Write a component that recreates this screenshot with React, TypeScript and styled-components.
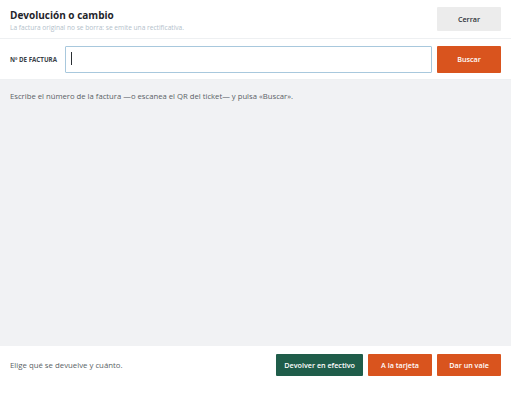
import React, { FC } from 'react';
import styled, { createGlobalStyle } from 'styled-components';

const GlobalStyle = createGlobalStyle`
  html, body {
    margin: 0;
    padding: 0;
    background: #ffffff;
  }
  body {
    font-family: 'Open Sans', 'Noto Sans', sans-serif;
    color: #333a40;
  }
`;

const Panel = styled('div')`
  width: 511px;
  height: 384px;
  display: flex;
  flex-direction: column;
  background: #ffffff;
`;

const Header = styled('header')`
  display: flex;
  align-items: center;
  justify-content: space-between;
  height: 38px;
  padding: 0 10px;
  border-bottom: 1px solid #eef0f2;
`;

const TitleBlock = styled('div')`
  display: flex;
  flex-direction: column;
  gap: 1px;
  padding-top: 1px;
`;

const Title = styled('h1')`
  margin: 0;
  font-size: 10px;
  font-weight: 700;
  line-height: 14px;
  color: #1f252b;
`;

const Subtitle = styled('p')`
  margin: 0;
  font-size: 6.6px;
  line-height: 9px;
  color: #b3c1cb;
`;

type Tone = 'neutral' | 'primary' | 'success';

const toneBg: Record<Tone, string> = {
  neutral: '#ececec',
  primary: '#d9541e',
  success: '#1f5d4a',
};

const Button = styled('button')<{ $tone: Tone; $size?: 'sm' | 'md' | 'lg' }>`
  height: ${({ $size }) => ($size === 'lg' ? '27px' : $size === 'sm' ? '22px' : '24px')};
  min-width: 64px;
  padding: 0 8px;
  border: none;
  border-radius: 1px;
  font-family: inherit;
  font-size: 7.2px;
  font-weight: 600;
  background: ${({ $tone }) => toneBg[$tone]};
  color: ${({ $tone }) => ($tone === 'neutral' ? '#2c3238' : '#ffffff')};
  cursor: pointer;
`;

const SearchRow = styled('div')`
  display: flex;
  align-items: center;
  gap: 5px;
  height: 40px;
  padding: 0 10px;
  border-bottom: 1px solid #eef0f2;
`;

const FieldLabel = styled('label')`
  font-size: 6.2px;
  font-weight: 700;
  color: #3a4148;
  text-transform: uppercase;
  white-space: nowrap;
  margin-right: 3px;
`;

const InputWrap = styled('div')`
  position: relative;
  flex: 1;
  display: flex;
`;

const Input = styled('input')`
  flex: 1;
  height: 27px;
  box-sizing: border-box;
  padding: 0 6px;
  border: 1px solid #a8c8dd;
  border-radius: 1px;
  outline: none;
  font-family: inherit;
  font-size: 9px;
  background: #ffffff;
`;

const Caret = styled('span')`
  position: absolute;
  left: 6px;
  top: 6px;
  width: 1px;
  height: 13px;
  background: #2a2f34;
`;

const Body = styled('main')`
  flex: 1;
  background: #f1f2f4;
  padding: 10px 10px;
`;

const Hint = styled('p')`
  margin: 0;
  font-size: 7.7px;
  line-height: 12px;
  color: #595f66;
`;

const Footer = styled('footer')`
  display: flex;
  align-items: center;
  gap: 5px;
  height: 38px;
  padding: 0 10px;
`;

const FooterNote = styled('span')`
  flex: 1;
  font-size: 7.8px;
  color: #595f66;
`;

const App: FC = () => {
  return (
    <Panel>
      <GlobalStyle />
      <Header>
        <TitleBlock>
          <Title>Devolución o cambio</Title>
          <Subtitle>La factura original no se borra: se emite una rectificativa.</Subtitle>
        </TitleBlock>
        <Button $tone='neutral'>Cerrar</Button>
      </Header>
      <SearchRow>
        <FieldLabel htmlFor='factura'>Nº de factura</FieldLabel>
        <InputWrap>
          <Input id='factura' type='text' />
          <Caret />
        </InputWrap>
        <Button $tone='primary' $size='lg'>Buscar</Button>
      </SearchRow>
      <Body>
        <Hint>Escribe el número de la factura —o escanea el QR del ticket— y pulsa «Buscar».</Hint>
      </Body>
      <Footer>
        <FooterNote>Elige qué se devuelve y cuánto.</FooterNote>
        <Button $tone='success' $size='sm'>Devolver en efectivo</Button>
        <Button $tone='primary' $size='sm'>A la tarjeta</Button>
        <Button $tone='primary' $size='sm'>Dar un vale</Button>
      </Footer>
    </Panel>
  );
};

export default App;
